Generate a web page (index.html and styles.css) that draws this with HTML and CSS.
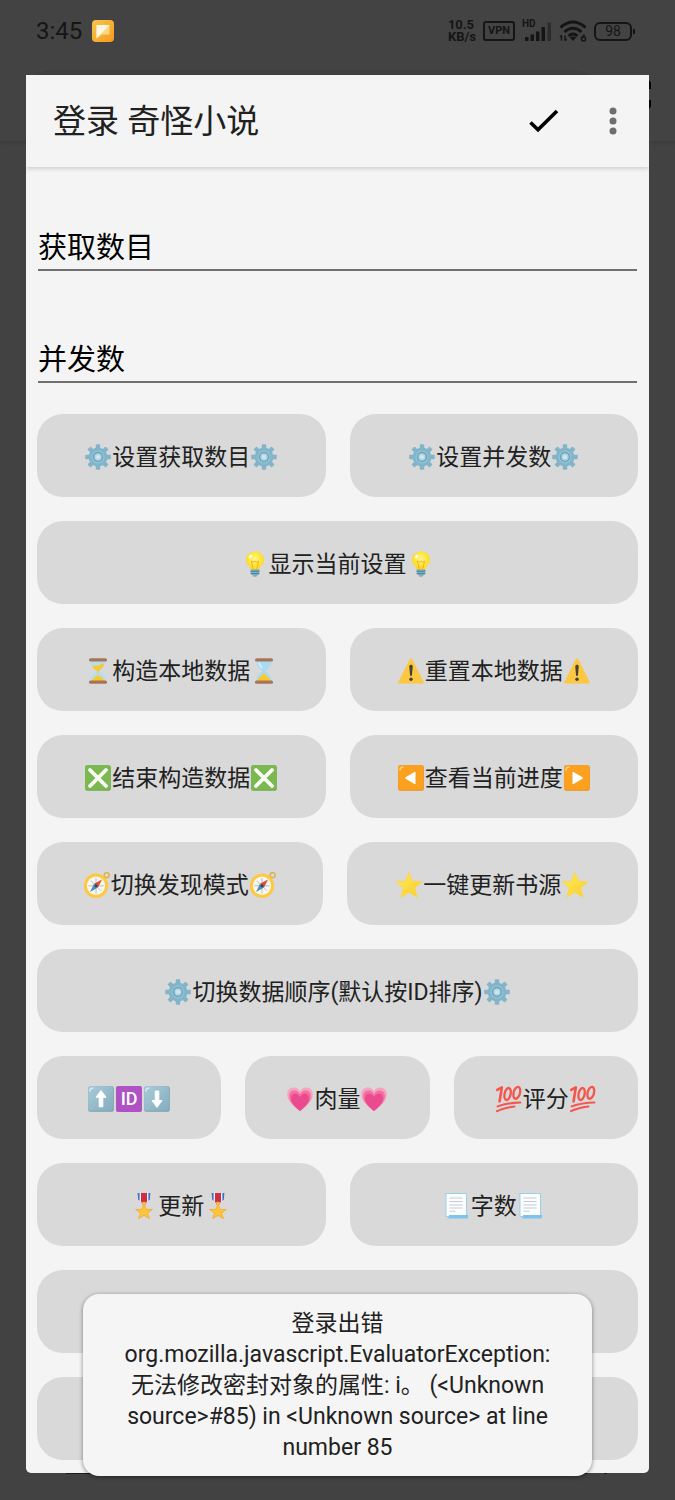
FILE: index.html
```
<!DOCTYPE html>
<html lang="zh-CN">

<head>
    <meta charset="UTF-8">
    <meta name="viewport" content="width=device-width, initial-scale=1">
    <title>登录 奇怪小说</title>
    <link rel="stylesheet" href="styles.css">
</head>

<body>
    <!-- 图标 -->
    <svg class="sprite" aria-hidden="true">
        <defs>
            <linearGradient id="g-key" x1="0" y1="0" x2="1" y2="1">
                <stop offset="0" stop-color="#a9cbd9" />
                <stop offset="1" stop-color="#84adbd" />
            </linearGradient>
            <linearGradient id="g-app" x1="0" y1="0" x2="1" y2="1">
                <stop offset="0" stop-color="#f5c64a" />
                <stop offset="1" stop-color="#f79a1c" />
            </linearGradient>
            <linearGradient id="g-star" x1="0" y1="0" x2="1" y2="1">
                <stop offset="0" stop-color="#ffee58" />
                <stop offset="1" stop-color="#fdc92f" />
            </linearGradient>
            <radialGradient id="g-bulb" cx=".5" cy=".4" r=".6">
                <stop offset="0" stop-color="#fff59d" />
                <stop offset=".5" stop-color="#ffe93b" />
                <stop offset="1" stop-color="#fbd21c" />
            </radialGradient>
        </defs>
        <symbol id="gear" viewBox="0 0 28 28">
            <g fill="#82b5c9">
                <rect x="11.8" y="1.2" width="4.4" height="25.6" rx=".8" />
                <rect x="11.8" y="1.2" width="4.4" height="25.6" rx=".8" transform="rotate(45 14 14)" />
                <rect x="11.8" y="1.2" width="4.4" height="25.6" rx=".8" transform="rotate(90 14 14)" />
                <rect x="11.8" y="1.2" width="4.4" height="25.6" rx=".8" transform="rotate(135 14 14)" />
                <circle cx="14" cy="14" r="9.4" />
            </g>
            <circle cx="14" cy="14" r="6.6" fill="#90c2d5" />
            <circle cx="14" cy="14" r="5" fill="#6a9fb5" />
            <circle cx="14" cy="14" r="3.7" fill="#a9d6e6" />
            <circle cx="14" cy="14" r="2.1" fill="#d8e3e6" />
        </symbol>
        <symbol id="bulb" viewBox="0 0 28 28">
            <path d="M14 1.4c-5.4 0-9 3.8-9 8.6 0 5 4.600 5.600 5.200 10.400h7.600c.6-4.800 5.200-5.400 5.200-10.400 0-4.800-3.600-8.600-9-8.600z" fill="url(#g-bulb)" />
            <path d="M12.400 19.500l-2-8.500 1.800 1.200L14 11l1.800 1.200 1.800-1.200-2 8.500" fill="none" stroke="#f0a92a" stroke-width=".9" />
            <ellipse cx="9.500" cy="6.500" rx="2.200" ry="1.400" fill="#fffde0" transform="rotate(-45 9.500 6.500)" />
            <path d="M9.600 19.600h8.800v4.400l-2 1.200c-.4 2-4.400 2-4.800 0l-2-1.200z" fill="#7cb0c4" />
            <path d="M9.600 21.200h8.800M9.800 23.600h8.400" stroke="#4f7f93" stroke-width="1" />
        </symbol>
        <symbol id="sand-top" viewBox="0 0 28 28">
            <path d="M6.500 3.500h15c0 6-2.800 7.500-5.700 10.500 2.900 3 5.700 4.500 5.700 10.500h-15c0-6 2.800-7.500 5.700-10.500-2.900-3-5.700-4.500-5.700-10.500z" fill="#b3dff2" />
            <path d="M7.600 8.400c4 .8 9-.4 12.600-2.400-.4 4-3 5.600-5.200 8h-2c-2-2-4.600-3.400-5.400-5.600z" fill="#fdc72e" />
            <path d="M13.500 14h1v6h-1z" fill="#fdc72e" />
            <path d="M7.500 24.500c.6-2.500 3.500-5.500 6.500-5.500s5.900 3 6.500 5.500z" fill="#fdc72e" />
            <rect x="5" y="1.200" width="18" height="3.400" rx="1.500" fill="#a87458" />
            <rect x="5" y="23.400" width="18" height="3.400" rx="1.500" fill="#a87458" />
        </symbol>
        <symbol id="sand-bottom" viewBox="0 0 28 28">
            <path d="M6.500 3.500h15c0 6-2.800 7.500-5.700 10.500 2.900 3 5.700 4.500 5.700 10.500h-15c0-6 2.800-7.500 5.700-10.500-2.900-3-5.700-4.500-5.700-10.500z" fill="#a9dcf3" />
            <path d="M9 5.500c.4 2.600 1.700 4 3 5.500" stroke="#e2f6fd" stroke-width="1.400" fill="none" />
            <path d="M7.200 24.500c.3-3.500 3.800-4.500 6.800-8.500 3 4 6.500 5 6.800 8.500z" fill="#fdc72e" />
            <rect x="5" y="1.200" width="18" height="3.400" rx="1.500" fill="#a87458" />
            <rect x="5" y="23.400" width="18" height="3.400" rx="1.500" fill="#a87458" />
        </symbol>
        <symbol id="warn" viewBox="0 0 28 28">
            <path d="M12.700 2.200c.6-1.100 2-1.100 2.600 0l11.200 22.200c.6 1.100-.1 2.200-1.300 2.200H2.800c-1.200 0-1.900-1.100-1.300-2.200z" fill="#fdc841" />
            <path d="M12.300 9.500c0-2.200 3.400-2.200 3.400 0l-.7 8.500c-.1 1.200-1.900 1.200-2 0z" fill="#454038" />
            <circle cx="14" cy="22.200" r="1.700" fill="#454038" />
        </symbol>
        <symbol id="cross" viewBox="0 0 28 28">
            <rect x="1.200" y="1.200" width="25.600" height="25.600" rx="2" fill="#6ea645" />
            <rect x="1.200" y="1.200" width="24.800" height="24.600" rx="2" fill="#7cb850" />
            <path d="M6 6l16 16M22 6L6 22" stroke="#fafdf8" stroke-width="3.800" stroke-linecap="round" />
        </symbol>
        <symbol id="left" viewBox="0 0 28 28">
            <rect x="1.200" y="1.200" width="25.600" height="25.600" rx="2" fill="#ec8d16" />
            <rect x="1.200" y="1.200" width="25" height="24.600" rx="2" fill="#fba01f" />
            <path d="M3 6q0-3 3-3" stroke="#ffd185" stroke-width="1.600" fill="none" stroke-linecap="round" />
            <path d="M18.500 8.500v11c0 .6-.6.900-1.100.6L8.600 14.700c-.5-.3-.5-1 0-1.400l8.800-5.400c.5-.3 1.100 0 1.100.6z" fill="#fff" />
        </symbol>
        <symbol id="right" viewBox="0 0 28 28">
            <rect x="1.200" y="1.200" width="25.600" height="25.600" rx="2" fill="#ec8d16" />
            <rect x="1.200" y="1.200" width="25" height="24.600" rx="2" fill="#fba01f" />
            <path d="M3 6q0-3 3-3" stroke="#ffd185" stroke-width="1.600" fill="none" stroke-linecap="round" />
            <path d="M9.500 8.500v11c0 .6.600.9 1.100.6l8.800-5.400c.5-.3.500-1 0-1.400l-8.800-5.400c-.5-.3-1.100 0-1.100.6z" fill="#fff" />
        </symbol>
        <symbol id="compass" viewBox="0 0 28 28">
            <circle cx="23.600" cy="4.200" r="2.500" fill="none" stroke="#e5ac3c" stroke-width="1.300" />
            <circle cx="13" cy="14.800" r="12.200" fill="#fcc93f" />
            <circle cx="13" cy="14.800" r="9.200" fill="#f8f6ee" />
            <path d="M13 7v15.600M5.200 14.800h15.600M8 9.800l10 10" stroke="#9fb5c0" stroke-width=".8" />
            <path d="M19 8.600l-4 8-4-3.800z" fill="#e0493d" />
            <path d="M7 21l4-8.200 4 3.800z" fill="#4b90b5" />
            <circle cx="13" cy="14.800" r="1.500" fill="#37474f" />
        </symbol>
        <symbol id="star" viewBox="0 0 28 28">
            <path d="M14 1.600l3.500 8.700 9.400.6-7.200 6.100 2.400 9.200L14 21.200l-8.100 5 2.400-9.200-7.200-6.100 9.400-.6z" fill="url(#g-star)" stroke="#fdd73b" stroke-width=".8" stroke-linejoin="round" />
        </symbol>
        <symbol id="up" viewBox="0 0 28 28">
            <rect x="1.200" y="1.200" width="25.600" height="25.600" rx="2" fill="#789eae" />
            <rect x="1.200" y="1.200" width="24.800" height="24.600" rx="2" fill="url(#g-key)" />
            <path d="M3 6q0-3 3-3" stroke="#d5e7ee" stroke-width="1.600" fill="none" stroke-linecap="round" />
            <path d="M14 5.400l5 6.800h-3.200v9.600h-3.600v-9.600H9z" fill="#fff" stroke="#fff" stroke-linejoin="round" />
        </symbol>
        <symbol id="down" viewBox="0 0 28 28">
            <rect x="1.200" y="1.200" width="25.600" height="25.600" rx="2" fill="#789eae" />
            <rect x="1.200" y="1.200" width="24.800" height="24.600" rx="2" fill="url(#g-key)" />
            <path d="M3 6q0-3 3-3" stroke="#d5e7ee" stroke-width="1.600" fill="none" stroke-linecap="round" />
            <path d="M14 22.400l5-6.800h-3.200V6h-3.600v9.600H9z" fill="#fff" stroke="#fff" stroke-linejoin="round" />
        </symbol>
        <symbol id="heart" viewBox="0 0 28 28">
            <path d="M14 26C6 20 1.200 15 1.200 9.400 1.200 5 4.200 2.400 7.800 2.400c2.800 0 5 1.600 6.200 4 1.200-2.400 3.400-4 6.200-4 3.600 0 6.600 2.600 6.600 7C26.800 15 22 20 14 26z" fill="#f5a3bf" />
            <path d="M14 26C7.300 20.500 3.200 16.500 3.200 11.300c0-3.600 2.300-5.700 5.100-5.700 2.500 0 4.500 1.500 5.700 3.900 1.200-2.400 3.200-3.900 5.700-3.900 2.800 0 5.100 2.100 5.100 5.700C24.800 16.500 20.700 20.500 14 26z" fill="#f36fa2" />
            <path d="M14 26C8.500 21.500 5 17.800 5 13.300c0-2.900 1.800-4.600 4-4.600 2.200 0 4 1.300 5 3.400 1-2.100 2.800-3.400 5-3.400 2.200 0 4 1.700 4 4.600C23 17.800 19.500 21.500 14 26z" fill="#ea4a8e" />
        </symbol>
        <!-- 100 分 -->
        <symbol id="hundred" viewBox="0 0 28 28">
            <g fill="none" stroke="#f4554c" stroke-linecap="round" stroke-linejoin="round">
                <path d="M2.200 4.800l4.600-2.400-2.200 14" stroke-width="2.600" />
                <ellipse cx="12.600" cy="9" rx="3" ry="6.100" stroke-width="2.300" transform="rotate(13 12.600 9)" />
                <ellipse cx="21.800" cy="7.800" rx="3.200" ry="6.100" stroke-width="2.300" transform="rotate(15 21.800 7.800)" />
                <path d="M2.600 21.400q10-3.600 22.800-3.900" stroke-width="2" />
                <path d="M2 26.200q6-3.200 17.500-4.700" stroke-width="2" />
            </g>
        </symbol>
        <symbol id="medal" viewBox="0 0 28 28">
            <path d="M7.600 1h3v8.400l-2.400-1.600zM20.400 1h-3v8.400l2.400-1.600z" fill="#3d6fc4" />
            <path d="M9.600 1h1.600v8.800H9.600zM16.800 1h1.600v8.800h-1.600z" fill="#eceff1" />
            <path d="M11 1h6v9.400h-6z" fill="#cf2e40" />
            <circle cx="14" cy="11.500" r="1.500" fill="none" stroke="#f0a52b" stroke-width="1.200" />
            <path d="M14 12.200l2.300 5.200 6 .2-4.800 3.600 1.900 5.400-5.400-3.200-5.400 3.200 1.900-5.400-4.800-3.600 6-.2z" fill="#fdc53b" stroke="#f3a928" stroke-width=".8" stroke-linejoin="round" />
        </symbol>
        <symbol id="page" viewBox="0 0 28 28">
            <path d="M3 1.500h20.500v23H3z" fill="#fbfdfe" stroke="#8ccdee" stroke-width=".9" />
            <path d="M6.500 6h13M6.500 9.500h13M6.500 13h13M6.500 16h13M6.500 19.200h6" stroke="#c3cbd0" stroke-width="1" />
            <path d="M6 23h19c.6 2.600-.4 3.600-2 3.600H3.600C5.600 26.400 6.200 25 6 23z" fill="#7cc4ec" />
        </symbol>
    </svg>

    <!-- 后面被遮住的页面 -->
    <div class="behind">
        <div class="behind-search"></div>
        <div class="behind-menu"></div>
    </div>
    <div class="behind-nav"></div>

    <header class="status">
        <div class="status-left">
            <span class="clock">3:45</span>
            <svg width="22" height="22" viewBox="0 0 22 22" aria-hidden="true">
                <rect width="22" height="22" rx="4" fill="url(#g-app)" />
                <path d="M4.500 5h13v9.500H10l-5.500 4z" fill="#fbd789" />
                <path d="M4.500 5h13L4.500 18.500z" fill="#fff6e2" />
            </svg>
        </div>
        <div class="status-right">
            <div class="speed">10.5<br>KB/s</div>
            <span class="vpn">VPN</span>
            <div class="signal">
                <span class="hd">HD</span>
                <svg width="30" height="20" viewBox="0 0 30 20" aria-hidden="true">
                    <path d="M3 16h3.500v4H3zM8.500 13.500H12V20H8.500zM14 10.500h3.500V20H14zM19.500 6H23v14h-3.500z" fill="#151515" />
                    <path d="M25.500 1.500H29V20h-3.500z" fill="#2c2c2c" />
                </svg>
            </div>
            <svg width="28" height="22" viewBox="0 0 28 22" aria-hidden="true">
                <g fill="none" stroke="#151515" stroke-width="3">
                    <path d="M1.500 7.500q12.500-11 25 0" />
                    <path d="M5.500 12q8.500-7.500 17 0" />
                    <path d="M9.500 16q4.500-4 9 0" />
                </g>
                <path d="M10.800 17.400q3.200-2 6.400 0L14 21z" fill="#151515" />
                <path d="M2.500 15.500v5M1 17l1.500-1.800M6 15.500v5M7.500 19L6 20.800" stroke="#151515" stroke-width="1.400" fill="none" />
                <path d="M25.500 14.500L23 18" stroke="#151515" stroke-width="1.600" />
                <circle cx="24.500" cy="18.800" r="2.100" fill="none" stroke="#151515" stroke-width="1.500" />
            </svg>
            <span class="battery">98</span>
        </div>
    </header>

    <main class="dialog">
        <div class="dialog-title">
            <h1>登录 奇怪小说</h1>
            <button class="icon-btn" type="submit" form="login" aria-label="确定">
                <svg width="32" height="32" viewBox="0 0 32 32">
                    <path d="M2.500 17.500l7.500 7.300L29 6" fill="none" stroke="#000" stroke-width="3.600" />
                </svg>
            </button>
            <button class="icon-btn" type="button" aria-label="更多选项">
                <svg width="32" height="32" viewBox="0 0 32 32" fill="#6e6e6e">
                    <circle cx="16" cy="6" r="3.500" />
                    <circle cx="16" cy="16" r="3.500" />
                    <circle cx="16" cy="26" r="3.500" />
                </svg>
            </button>
        </div>

        <form class="dialog-body" id="login">
            <input class="field" type="text" placeholder="获取数目" aria-label="获取数目">
            <input class="field" type="text" placeholder="并发数" aria-label="并发数">

            <div class="rows">
                <div class="row">
                    <button type="button" class="btn"><svg class="emoji"><use href="#gear" /></svg>设置获取数目<svg class="emoji"><use href="#gear" /></svg></button>
                    <button type="button" class="btn"><svg class="emoji"><use href="#gear" /></svg>设置并发数<svg class="emoji"><use href="#gear" /></svg></button>
                </div>
                <div class="row">
                    <button type="button" class="btn"><svg class="emoji"><use href="#bulb" /></svg>显示当前设置<svg class="emoji"><use href="#bulb" /></svg></button>
                </div>
                <div class="row">
                    <button type="button" class="btn"><svg class="emoji"><use href="#sand-top" /></svg>构造本地数据<svg class="emoji"><use href="#sand-bottom" /></svg></button>
                    <button type="button" class="btn"><svg class="emoji"><use href="#warn" /></svg>重置本地数据<svg class="emoji"><use href="#warn" /></svg></button>
                </div>
                <div class="row">
                    <button type="button" class="btn"><svg class="emoji"><use href="#cross" /></svg>结束构造数据<svg class="emoji"><use href="#cross" /></svg></button>
                    <button type="button" class="btn"><svg class="emoji"><use href="#left" /></svg>查看当前进度<svg class="emoji"><use href="#right" /></svg></button>
                </div>
                <div class="row row-uneven">
                    <button type="button" class="btn"><svg class="emoji"><use href="#compass" /></svg>切换发现模式<svg class="emoji"><use href="#compass" /></svg></button>
                    <button type="button" class="btn"><svg class="emoji"><use href="#star" /></svg>一键更新书源<svg class="emoji"><use href="#star" /></svg></button>
                </div>
                <div class="row">
                    <button type="button" class="btn"><svg class="emoji"><use href="#gear" /></svg>切换数据顺序(默认按ID排序)<svg class="emoji"><use href="#gear" /></svg></button>
                </div>
                <div class="row">
                    <button type="button" class="btn"><svg class="emoji"><use href="#up" /></svg><span class="id-key">ID</span><svg class="emoji"><use href="#down" /></svg></button>
                    <button type="button" class="btn"><svg class="emoji"><use href="#heart" /></svg>肉量<svg class="emoji"><use href="#heart" /></svg></button>
                    <button type="button" class="btn"><svg class="emoji"><use href="#hundred" /></svg>评分<svg class="emoji"><use href="#hundred" /></svg></button>
                </div>
                <div class="row">
                    <button type="button" class="btn"><svg class="emoji"><use href="#medal" /></svg>更新<svg class="emoji"><use href="#medal" /></svg></button>
                    <button type="button" class="btn"><svg class="emoji"><use href="#page" /></svg>字数<svg class="emoji"><use href="#page" /></svg></button>
                </div>
                <div class="row">
                    <button type="button" class="btn" aria-label="排序"></button>
                </div>
                <div class="row">
                    <button type="button" class="btn" aria-label="其他"></button>
                </div>
            </div>
        </form>
    </main>

    <div class="toast" role="alert">登录出错<br>org.mozilla.javascript.EvaluatorException:<br>无法修改密封对象的属性: i。 (&lt;Unknown<br>source&gt;#85) in &lt;Unknown source&gt; at line<br>number 85</div>
</body>

</html>
```
FILE: styles.css
```
* {
    margin: 0;
    padding: 0;
    box-sizing: border-box;
}

body {
    position: relative;
    background-color: #424242;
    color: #212121;
    font-family: Roboto, "Noto Sans CJK SC", sans-serif;
    font-size: 23px;
}

button,
input {
    font: inherit;
    color: inherit;
    border: none;
}

.sprite {
    position: absolute;
    width: 0;
    height: 0;
}

/* 背景 */
.behind {
    position: absolute;
    top: 0;
    left: 0;
    right: 0;
    height: 141px;
    background-color: #434343;
    box-shadow: 0 1px 4px rgba(0, 0, 0, 0.15);
}

.behind-search {
    position: absolute;
    top: 70px;
    left: 26px;
    right: 76px;
    height: 50px;
    border-radius: 25px;
    background-color: #3f3f3f;
}

.behind-menu {
    position: absolute;
    top: 80px;
    right: 24px;
    width: 8px;
    height: 29px;
    border: solid #000;
    border-width: 9px 0;
    border-radius: 4px;
}

.behind-nav {
    position: absolute;
    left: 66px;
    right: 88px;
    bottom: 25px;
    height: 4px;
    background-color: #1c1c1c;
}

.behind-nav::after {
    content: "";
    position: absolute;
    right: -20px;
    width: 3px;
    height: 4px;
    background-color: #1c1c1c;
}

/* 状态栏 */
.status {
    position: relative;
    display: flex;
    justify-content: space-between;
    align-items: center;
    height: 62px;
    padding: 0 40px 0 36px;
    color: #151515;
}

.status-left,
.status-right {
    display: flex;
    align-items: center;
}

.status-left {
    gap: 10px;
}

.status-right {
    gap: 7px;
}

.clock {
    font-size: 24px;
}

.speed {
    font-size: 13px;
    font-weight: bold;
    line-height: 12px;
}

.vpn {
    padding: 0 3px;
    border: 2px solid #151515;
    border-radius: 3px;
    font-size: 11px;
    font-weight: bold;
    line-height: 16px;
}

.signal {
    position: relative;
    display: flex;
}

.hd {
    position: absolute;
    top: -2px;
    left: 0;
    font-size: 10px;
    font-weight: bold;
    line-height: 10px;
}

.battery {
    position: relative;
    width: 38px;
    margin-right: 3px;
    border: 2px solid #151515;
    border-radius: 6px;
    font-size: 14px;
    line-height: 15px;
    text-align: center;
}

.battery::after {
    content: "";
    position: absolute;
    top: 5px;
    right: -5px;
    width: 2px;
    height: 5px;
    background-color: #151515;
}

/* 对话框 */
.dialog {
    position: relative;
    margin: 13px 26px 26px;
    border-radius: 0 0 5px 5px;
    background-color: #f4f4f4;
}

.dialog-title {
    display: flex;
    align-items: center;
    height: 92px;
    padding: 0 10px 0 27px;
    box-shadow: 0 1px 5px rgba(0, 0, 0, 0.2);
    clip-path: inset(0 0 -8px);
}

.dialog-title h1 {
    flex: 1;
    padding-bottom: 4px;
    font-size: 33px;
    font-weight: normal;
}

.icon-btn {
    display: flex;
    justify-content: center;
    width: 52px;
    background: none;
    cursor: pointer;
}

.icon-btn + .icon-btn {
    margin-left: 17px;
}

.dialog-body {
    padding: 52px 11px 13px;
}

.field {
    display: block;
    width: calc(100% - 2px);
    height: 52px;
    margin: 0 1px 60px;
    padding-top: 8px;
    border-bottom: 2px solid #6f6f6f;
    outline: none;
    background: none;
    font-size: 29px;
}

.field::placeholder {
    color: #000;
    opacity: 1;
}

.field + .rows {
    margin-top: -29px;
}

.rows {
    display: flex;
    flex-direction: column;
    gap: 24px;
}

.row {
    display: flex;
    gap: 24px;
}

.btn {
    display: flex;
    flex: 1;
    justify-content: center;
    align-items: center;
    height: 83px;
    padding-bottom: 2px;
    border-radius: 26px;
    background-color: #d9d9d9;
    white-space: nowrap;
    cursor: pointer;
}

.row-uneven .btn:last-child {
    flex-grow: 1.02;
}

.btn:active {
    background-color: #cacaca;
}

.emoji {
    width: 28px;
    height: 28px;
    margin-top: 4px;
}

.id-key {
    width: 26px;
    margin: 4px 1px 0;
    border-radius: 2px;
    background-color: #ae52c4;
    color: #fff;
    font-size: 18px;
    font-weight: 500;
    line-height: 26px;
    text-align: center;
}

/* 提示 */
.toast {
    position: absolute;
    left: 83px;
    right: 83px;
    bottom: 23px;
    padding: 14px 0 13px;
    border-radius: 16px;
    background-color: #f5f5f5;
    box-shadow: 0 1px 4px rgba(0, 0, 0, 0.45);
    line-height: 31px;
    text-align: center;
    white-space: nowrap;
}
```
